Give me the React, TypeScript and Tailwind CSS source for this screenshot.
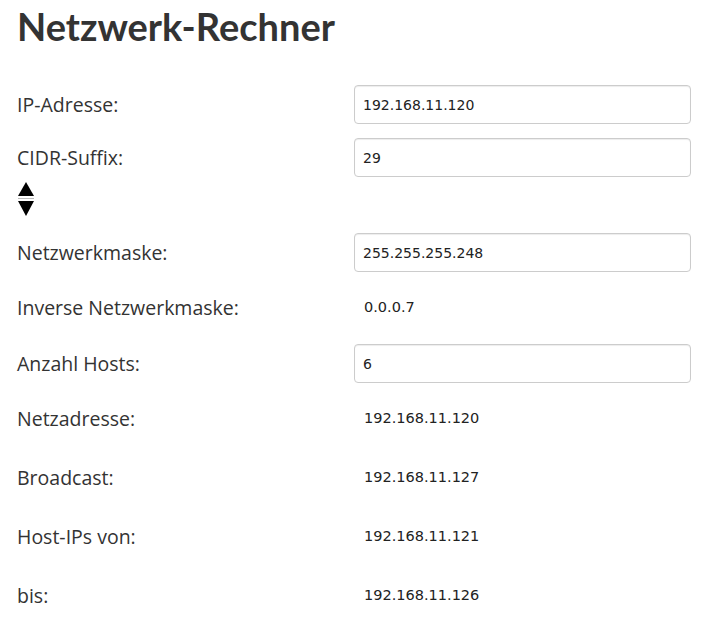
import React from "react";

const headFont = { fontFamily: "Lato, 'Noto Sans', sans-serif" };
const labelFont = { fontFamily: "'Open Sans', 'Noto Sans', sans-serif" };
const valueFont = { fontFamily: "'DejaVu Sans', Verdana, sans-serif" };

function Spinner() {
  return (
    <svg width="18" height="37" viewBox="0 0 18 37" className="block">
      <polygon points="9,1 17,15 1,15" fill="#000" />
      <rect x="1" y="17" width="16" height="1" fill="#bbb" />
      <polygon points="1,20 17,20 9,35" fill="#000" />
    </svg>
  );
}

function InputRow({ label, value, mt, extra }: { label: string; value: string; mt: string; extra?: React.ReactNode }) {
  return (
    <div className={`grid grid-cols-2 items-start ${mt}`}>
      <div>
        <div className="h-[39px] flex items-center text-[19.5px] text-[#333]" style={labelFont}>
          {label}
        </div>
        {extra}
      </div>
      <input
        readOnly
        value={value}
        className="h-[39px] w-full rounded-[4px] border border-[#ccc] bg-white pl-[8px] text-[14px] text-[#222] shadow-[inset_0_1px_1px_rgba(0,0,0,0.075)] outline-none"
        style={valueFont}
      />
    </div>
  );
}

function TextRow({ label, value, mt }: { label: string; value: string; mt: string }) {
  return (
    <div className={`grid grid-cols-2 items-center h-[39px] ${mt}`}>
      <div className="text-[19.5px] text-[#333]" style={labelFont}>
        {label}
      </div>
      <div className="pl-[10px] text-[14.5px] text-[#222]" style={valueFont}>
        {value}
      </div>
    </div>
  );
}

export default function App() {
  return (
    <div className="min-h-[621px] w-[709px] bg-white pl-[17px] pr-[18px]">
      <h1 className="pt-[4px] text-[38px] font-bold leading-[44px] text-[#333]" style={headFont}>
        Netzwerk-Rechner
      </h1>
      <div className="flex flex-col">
        <InputRow label="IP-Adresse:" value="192.168.11.120" mt="mt-[37px]" />
        <InputRow
          label="CIDR-Suffix:"
          value="29"
          mt="mt-[14px]"
          extra={
            <div className="mt-[4px]">
              <Spinner />
            </div>
          }
        />
        <InputRow label="Netzwerkmaske:" value="255.255.255.248" mt="mt-[15px]" />
        <TextRow label="Inverse Netzwerkmaske:" value="0.0.0.7" mt="mt-[16px]" />
        <InputRow label="Anzahl Hosts:" value="6" mt="mt-[17px]" />
        <TextRow label="Netzadresse:" value="192.168.11.120" mt="mt-[16px]" />
        <TextRow label="Broadcast:" value="192.168.11.127" mt="mt-[20px]" />
        <TextRow label="Host-IPs von:" value="192.168.11.121" mt="mt-[20px]" />
        <TextRow label="bis:" value="192.168.11.126" mt="mt-[20px]" />
      </div>
    </div>
  );
}
